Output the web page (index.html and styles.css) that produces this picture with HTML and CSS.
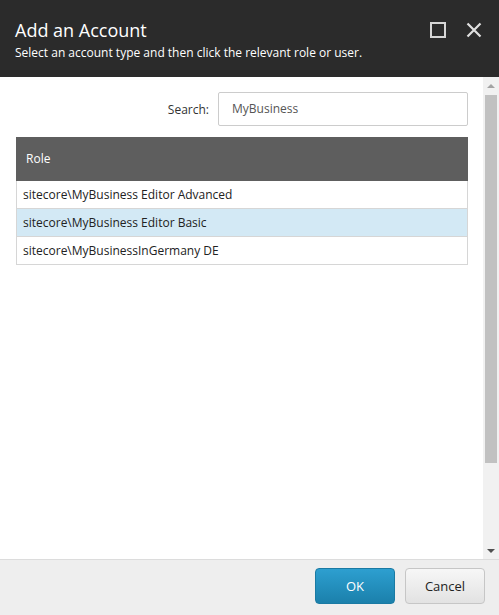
FILE: index.html
```html
<!DOCTYPE html>
<html>
<head>
<meta charset="utf-8">
<link rel="stylesheet" href="styles.css">
</head>
<body>
<div class="dialog">
  <header class="head">
    <div class="titles">
      <h1 class="title">Add an Account</h1>
      <p class="subtitle">Select an account type and then click the relevant role or user.</p>
    </div>
    <div class="controls">
      <svg class="ctl" width="16" height="16" viewBox="0 0 16 16"><rect x="1" y="1" width="14" height="14" fill="none" stroke="#d6d6d6" stroke-width="2"/></svg>
      <svg class="ctl" width="16" height="16" viewBox="0 0 16 16"><path d="M1.5 1.5 L14.5 14.5 M14.5 1.5 L1.5 14.5" stroke="#e0e0e0" stroke-width="2.2" fill="none"/></svg>
    </div>
  </header>
  <div class="body">
    <main class="content">
      <div class="search">
        <label class="search-label">Search:</label>
        <div class="search-input">MyBusiness</div>
      </div>
      <div class="table">
        <div class="th">Role</div>
        <div class="row">sitecore\MyBusiness Editor Advanced</div>
        <div class="row selected">sitecore\MyBusiness Editor Basic</div>
        <div class="row">sitecore\MyBusinessInGermany DE</div>
      </div>
    </main>
    <div class="scrollbar">
      <div class="arrow up"></div>
      <div class="track"><div class="thumb"></div></div>
      <div class="arrow down"></div>
    </div>
  </div>
  <footer class="foot">
    <button class="btn ok">OK</button>
    <button class="btn cancel">Cancel</button>
  </footer>
</div>
</body>
</html>
```
FILE: styles.css
```css
* { box-sizing: border-box; }
html, body { margin: 0; padding: 0; }
body {
  font-family: "Open Sans", "Liberation Sans", sans-serif;
  font-size: 12px;
  color: #333;
  background: #fff;
}
.dialog {
  width: 499px;
  height: 615px;
  display: flex;
  flex-direction: column;
}
.head {
  height: 77px;
  background: #2b2b2b;
  display: flex;
  justify-content: space-between;
  padding: 0 17px 0 15px;
}
.title {
  margin: 0;
  padding-top: 18px;
  font-size: 18px;
  font-weight: 400;
  line-height: 24px;
  color: #fff;
}
.subtitle {
  margin: 2px 0 0;
  font-size: 12px;
  line-height: 17px;
  color: #fff;
}
.controls {
  display: flex;
  gap: 20px;
  padding-top: 22px;
}
.ctl { display: block; }
.body {
  flex: 1;
  display: flex;
  min-height: 0;
}
.content {
  flex: 1;
  padding: 15px 15px 0 16px;
}
.search {
  display: flex;
  justify-content: flex-end;
  align-items: center;
  gap: 9px;
}
.search-label {
  color: #333;
}
.search-input {
  width: 250px;
  height: 34px;
  border: 1px solid #ccc;
  border-radius: 2px;
  padding: 0 13px;
  line-height: 32px;
  color: #555;
}
.table {
  margin-top: 11px;
}
.th {
  height: 44px;
  background: #5e5e5e;
  color: #fff;
  padding-left: 10px;
  line-height: 44px;
}
.row {
  height: 28px;
  line-height: 27px;
  padding-left: 6px;
  border: 1px solid #d6d6d6;
  border-top: none;
  color: #222;
}
.row.selected {
  background: #d3e9f5;
}
.scrollbar {
  width: 16px;
  background: #f1f1f1;
  display: flex;
  flex-direction: column;
}
.arrow {
  height: 17px;
  display: flex;
  justify-content: center;
  align-items: center;
}
.arrow.up::before {
  content: "";
  border-left: 4px solid transparent;
  border-right: 4px solid transparent;
  border-bottom: 4px solid #a3a3a3;
}
.arrow.down::before {
  content: "";
  border-left: 4px solid transparent;
  border-right: 4px solid transparent;
  border-top: 4px solid #505050;
}
.track {
  flex: 1;
  padding: 1px 2px 0;
}
.thumb {
  height: 368px;
  background: #c1c1c1;
}
.foot {
  height: 56px;
  background: #eeeeee;
  border-top: 1px solid #dcdcdc;
  display: flex;
  justify-content: flex-end;
  align-items: flex-start;
  gap: 10px;
  padding: 8px 14px 0 0;
}
.btn {
  width: 80px;
  height: 36px;
  border-radius: 4px;
  font-family: "Open Sans", "Liberation Sans", sans-serif;
  font-size: 13px;
  padding: 0;
}
.ok {
  background: linear-gradient(#2d9fd0, #1b80ab);
  border: 1px solid #1a7aa3;
  color: #fff;
}
.cancel {
  background: linear-gradient(#f7f7f7, #e2e2e2);
  border: 1px solid #c6c6c6;
  color: #222;
}
```
